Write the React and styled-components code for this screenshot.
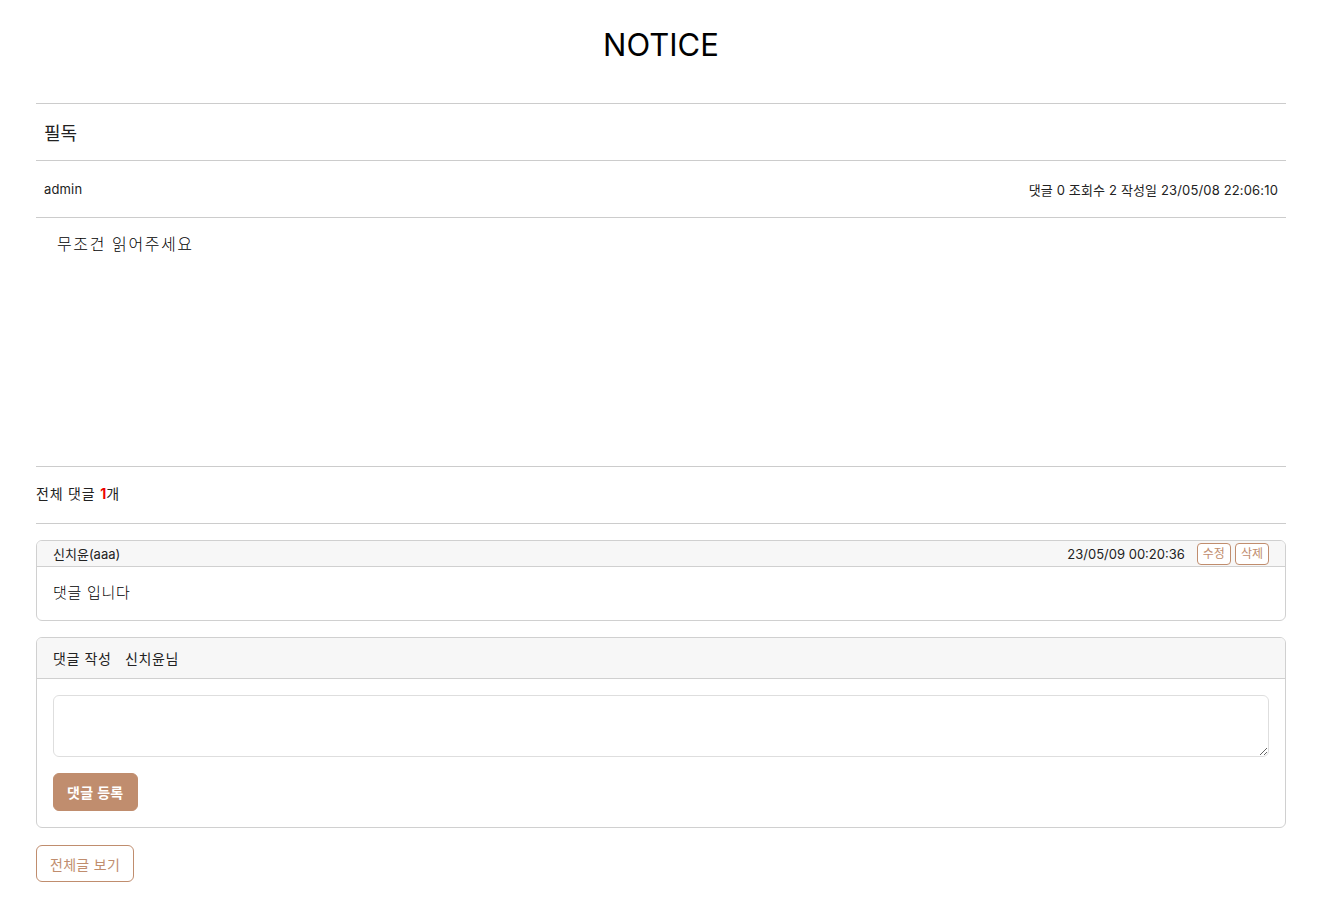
import React from 'react';
import styled, { createGlobalStyle, css } from 'styled-components';

const accent = '#c08d6e';

const GlobalStyle = createGlobalStyle`
  body {
    margin: 0;
    background: #fff;
    color: #212529;
    font-family: Inter, "Noto Sans CJK KR", sans-serif;
  }
  * { box-sizing: border-box; }
`;

const Page = styled.div`
  padding: 0 32px 16px 36px;
`;

const Title = styled.h1`
  margin: 0;
  padding: 26px 0 40px;
  text-align: center;
  font-size: 31px;
  font-weight: 400;
  line-height: 37px;
  color: #000;
`;

const Row = styled.div`
  display: flex;
  align-items: center;
  justify-content: space-between;
  border-top: 1px solid #ccc;
  padding: 0 8px;
  height: ${({ h }) => h}px;
  font-size: ${({ size }) => size}px;
  letter-spacing: ${({ ls = 0 }) => ls}px;
  color: #222;
`;

const Content = styled.div`
  border-top: 1px solid #ccc;
  height: 249px;
  padding: 15px 21px;
  font-size: 16px;
  font-weight: 300;
  line-height: 22px;
  color: #000;
  letter-spacing: 1.6px;
`;

const CountRow = styled.div`
  border-top: 1px solid #ccc;
  border-bottom: 1px solid #ccc;
  height: 58px;
  padding-bottom: 4px;
  display: flex;
  align-items: center;
  font-size: 14px;
  letter-spacing: 0.8px;
  color: #222;
`;

const Red = styled.b`
  color: #e00;
  letter-spacing: 0;
`;

const Card = styled.div`
  border: 1px solid #d0d0d0;
  border-radius: 6px;
  margin-top: ${({ mt }) => mt}px;
  overflow: hidden;
`;

const CardHeader = styled.div`
  display: flex;
  align-items: center;
  justify-content: space-between;
  background: #f7f7f7;
  border-bottom: 1px solid #d0d0d0;
  padding: 0 16px;
  height: ${({ h }) => h}px;
  font-size: ${({ size }) => size}px;
  letter-spacing: ${({ ls = 0 }) => ls}px;
  color: #222;
`;

const Right = styled.div`
  display: flex;
  align-items: center;
  gap: 4px;
`;

const Date = styled.span`
  margin-right: 8px;
`;

const outline = css`
  background: #fff;
  color: ${accent};
  border: 1px solid ${accent};
`;

const SmallBtn = styled.button`
  ${outline};
  font-family: inherit;
  font-size: 12px;
  line-height: 18px;
  padding: 1px 5px;
  border-radius: 4px;
`;

const CardBody = styled.div`
  padding: ${({ pad }) => pad};
  font-size: 14px;
  color: #222;
`;

const CommentText = styled.div`
  font-size: 15px;
  font-weight: 300;
  letter-spacing: 0.7px;
  color: #000;
`;

const TextArea = styled.textarea`
  display: block;
  width: 100%;
  height: 62px;
  border: 1px solid #dedede;
  border-radius: 6px;
  font-family: inherit;
  outline: none;
`;

const Button = styled.button`
  font-family: inherit;
  font-size: 14px;
  border-radius: 6px;
  padding: 0 ${({ px = 12 }) => px}px;
  height: ${({ h }) => h}px;
  letter-spacing: 0.3px;
  ${({ variant }) =>
    variant === 'solid'
      ? css`
          background: ${accent};
          color: #fff;
          border: 1px solid ${accent};
          font-weight: 600;
        `
      : outline};
`;

const SubmitRow = styled.div`
  margin-top: 16px;
`;

const Footer = styled.div`
  margin-top: 17px;
`;

export default function App() {
  return (
    <>
      <GlobalStyle />
      <Page>
        <Title>NOTICE</Title>
        <Row h={57} size={18}>필독</Row>
        <Row h={57} size={13} ls={0.15}>
          <span>admin</span>
          <span>댓글 0 조회수 2 작성일 23/05/08 22:06:10</span>
        </Row>
        <Content>무조건 읽어주세요</Content>
        <CountRow>
          전체 댓글&nbsp;<Red>1</Red>개
        </CountRow>
        <Card mt={16}>
          <CardHeader h={26} size={13}>
            <span>신치윤(aaa)</span>
            <Right>
              <Date>23/05/09 00:20:36</Date>
              <SmallBtn>수정</SmallBtn>
              <SmallBtn>삭제</SmallBtn>
            </Right>
          </CardHeader>
          <CardBody pad="14px 16px 18px">
            <CommentText>댓글 입니다</CommentText>
          </CardBody>
        </Card>
        <Card mt={16}>
          <CardHeader h={41} size={14} ls={0.6}>
            <span>댓글 작성&nbsp;&nbsp;&nbsp;신치윤님</span>
          </CardHeader>
          <CardBody pad="16px 16px 16px">
            <TextArea />
            <SubmitRow>
              <Button variant="solid" h={38} px={13}>
                댓글 등록
              </Button>
            </SubmitRow>
          </CardBody>
        </Card>
        <Footer>
          <Button h={37} px={13}>전체글 보기</Button>
        </Footer>
      </Page>
    </>
  );
}
